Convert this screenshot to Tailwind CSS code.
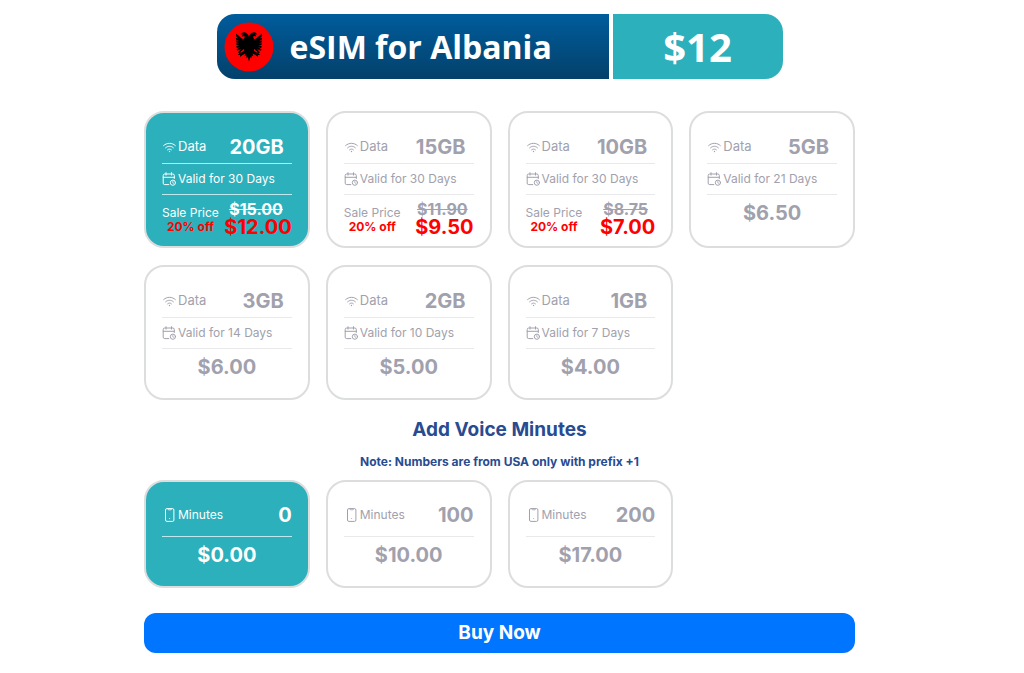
<!DOCTYPE html>
<html lang="en">
<head>
    <meta charset="UTF-8">
    <meta name="viewport" content="width=device-width, initial-scale=1.0">
    <title>eSIM for Albania</title>
    <script src="https://cdn.jsdelivr.net/npm/@tailwindcss/browser@4"></script>
</head>
<body class="bg-white font-['Inter',sans-serif]">
    <!-- Shared icons -->
    <svg class="hidden">
        <symbol id="icon-wifi" viewBox="0 0 14 14" fill="none" stroke="currentColor" stroke-linecap="round">
            <path d="M1.600 5.600C4.800 2.500 10.200 2.500 13.400 5.600M3.600 7.800c2.200-2.100 5.600-2.100 7.800 0M5.600 9.800c1.100-1 2.700-1 3.800 0"/>
            <circle cx="7.500" cy="11.500" r=".7" fill="currentColor" stroke="none"/>
        </symbol>
        <symbol id="icon-calendar" viewBox="0 0 14 14" fill="none" stroke="currentColor" stroke-linecap="round" stroke-linejoin="round">
            <path d="M6.800 12.600H2.700A1.500 1.500 0 0 1 1.200 11.100V3.500A1.500 1.500 0 0 1 2.700 2h8.100a1.500 1.500 0 0 1 1.500 1.500v3M1.200 5.300h11.100M4 .7v2.400M9.500.7v2.400"/>
            <circle cx="10.900" cy="10.700" r="2.600"/>
            <path d="M10.800 9.500v1.300l.8.500" stroke-width=".8"/>
        </symbol>
        <symbol id="icon-phone" viewBox="0 0 14 14" fill="none" stroke="currentColor">
            <rect x="3.500" y=".6" width="8.400" height="12.800" rx="1.400"/>
            <path d="M5.800.8l.5 1h2.800l.5-1" stroke-width=".8"/>
            <circle cx="7.700" cy="10.600" r=".5" fill="currentColor" stroke="none"/>
        </symbol>
        <symbol id="eagle-half" viewBox="0 0 50 50">
            <path d="M25.100 15.500C24.600 12 21.500 9.600 18.700 10.600L16.600 12.300 18.900 12.500 17.600 14.400 20.500 14C21 15.600 20.300 16.900 19 17.300 16.500 16 14.600 13.500 11.900 11.600L12.400 14.700 14.600 16.600 11.800 15.800 12.300 17.700 15 19 11.800 18.600 12.300 20.500 15.200 21.300 12 21.500 12.700 23.300 15.700 23.300 12 24.600 13 26 16.200 25.200 12.200 27.600 13.400 28.800 17 26.900 14.300 30 15.800 30.600 19.800 26.900 20.300 28.300 17.600 30.500 13.800 30 15.600 31.600 13.600 33 16.200 32.900 15.900 35 18.200 33.300 21.400 31.400 20.600 34.300 22.300 33.500 22.500 36 23.800 35.200 25.100 39.500Z"/>
        </symbol>
    </svg>

    <div class="pr-[25px]">
        <main class="mx-auto max-w-[711px] pt-3.5 pb-5">
            <header class="mx-auto flex h-[65px] max-w-[566px] gap-1 overflow-hidden rounded-[18px] font-['Open_Sans',sans-serif] font-bold text-white">
                <div class="flex grow items-center gap-4 bg-linear-to-b from-[#005c9c] to-[#03416b] pl-[7px]">
                    <svg class="size-[50px] shrink-0" viewBox="0 0 50 50" role="img" aria-label="Flag of Albania">
                        <circle cx="25" cy="25" r="24.500" fill="#f00"/>
                        <use href="#eagle-half" width="50" height="50"/>
                        <use href="#eagle-half" width="50" height="50" transform="translate(50 0) scale(-1 1)"/>
                    </svg>
                    <h1 class="text-[32px] leading-10">eSIM for Albania</h1>
                </div>
                <div id="total" class="flex w-[170px] shrink-0 items-center justify-center bg-[#2cb0bc] text-[40px] leading-10">$12</div>
            </header>

            <form id="order">
                <div id="plans" role="radiogroup" aria-label="Data plan" class="mt-8 grid grid-cols-2 gap-x-4 gap-y-[17px] sm:grid-cols-4"></div>

                <h2 class="pt-[18px] text-center text-[19px] leading-6 font-bold text-[#284b91]">Add Voice Minutes</h2>
                <p class="pt-3 pb-2.5 text-center text-[12px] leading-4 font-bold text-[#284b91]">Note: Numbers are from USA only with prefix +1</p>

                <div id="minutes" role="radiogroup" aria-label="Voice minutes" class="grid grid-cols-2 gap-x-4 gap-y-[17px] sm:grid-cols-4"></div>

                <button type="submit" class="mt-[25px] h-10 w-full cursor-pointer rounded-[12px] bg-[#0075ff] text-[19px] font-bold text-white hover:bg-[#0068e6]">Buy Now</button>
            </form>
        </main>
    </div>

    <script>
        const plans = [
            { data: '20GB', days: 30, price: '12.00', old: '15.00' },
            { data: '15GB', days: 30, price: '9.50', old: '11.90' },
            { data: '10GB', days: 30, price: '7.00', old: '8.75' },
            { data: '5GB', days: 21, price: '6.50' },
            { data: '3GB', days: 14, price: '6.00' },
            { data: '2GB', days: 10, price: '5.00' },
            { data: '1GB', days: 7, price: '4.00' }
        ];
        const minutes = [
            { count: 0, price: '0.00' },
            { count: 100, price: '10.00' },
            { count: 200, price: '17.00' }
        ];

        const cardClass = 'group block cursor-pointer rounded-[20px] border-2 border-[#dcdddd] px-4 pt-4 pb-2 text-[#a1a1ad] has-checked:bg-[#2cb0bc] has-checked:text-white has-focus-visible:outline-2';
        const lineClass = 'border-b border-[#e9e9ec] group-has-checked:border-white/70';
        const radioClass = 'absolute appearance-none';

        function icon(name) {
            return `<svg class="size-3.5 shrink-0"><use href="#icon-${name}"/></svg>`;
        }

        function priceBlock(plan) {
            if (!plan.old) {
                return `<div class="h-[41px] pt-[5px] text-center text-[20px] leading-[26px] font-bold">$${plan.price}</div>`;
            }
            return `
                <div class="flex h-[43px] justify-between pt-[5px] text-center">
                    <div class="pt-1.5 text-[12px] leading-[14px]">
                        <div>Sale Price</div>
                        <div class="font-bold text-[#f00]">20% off</div>
                    </div>
                    <div class="font-bold">
                        <div class="pr-1 text-[16px] leading-[18px]"><s>$${plan.old}</s></div>
                        <div class="text-[20px] leading-[18px] text-[#f00]">$${plan.price}</div>
                    </div>
                </div>`;
        }

        document.getElementById('plans').innerHTML = plans.map((plan, i) => `
            <label class="${cardClass}">
                <input type="radio" name="plan" value="${plan.price}" class="${radioClass}" ${i === 0 ? 'checked' : ''}>
                <div class="flex h-[35px] items-center justify-between pt-0.5 pr-2 ${lineClass}">
                    <span class="flex items-center gap-0.5 text-[13px]">${icon('wifi')}Data</span>
                    <span class="text-[20px] font-bold">${plan.data}</span>
                </div>
                <div class="flex h-[31px] items-center gap-0.5 text-[12px] whitespace-nowrap ${lineClass}">${icon('calendar')}Valid for ${plan.days} Days</div>
                ${priceBlock(plan)}
            </label>`).join('');

        document.getElementById('minutes').innerHTML = minutes.map((item, i) => `
            <label class="${cardClass}">
                <input type="radio" name="minutes" value="${item.price}" class="${radioClass}" ${i === 0 ? 'checked' : ''}>
                <div class="flex h-[39px] items-center justify-between pb-1 ${lineClass}">
                    <span class="flex items-center gap-0.5 text-[12px]">${icon('phone')}Minutes</span>
                    <span class="text-[20px] font-bold">${item.count}</span>
                </div>
                <div class="h-[41px] pt-[5px] text-center text-[20px] leading-[26px] font-bold">$${item.price}</div>
            </label>`).join('');

        // Keep the header total in sync with the selected cards
        const order = document.getElementById('order');
        order.addEventListener('change', () => {
            const total = Number(order.elements.plan.value) + Number(order.elements.minutes.value);
            document.getElementById('total').textContent = '$' + (Number.isInteger(total) ? total : total.toFixed(2));
        });
        order.addEventListener('submit', e => e.preventDefault());
    </script>
</body>
</html>
